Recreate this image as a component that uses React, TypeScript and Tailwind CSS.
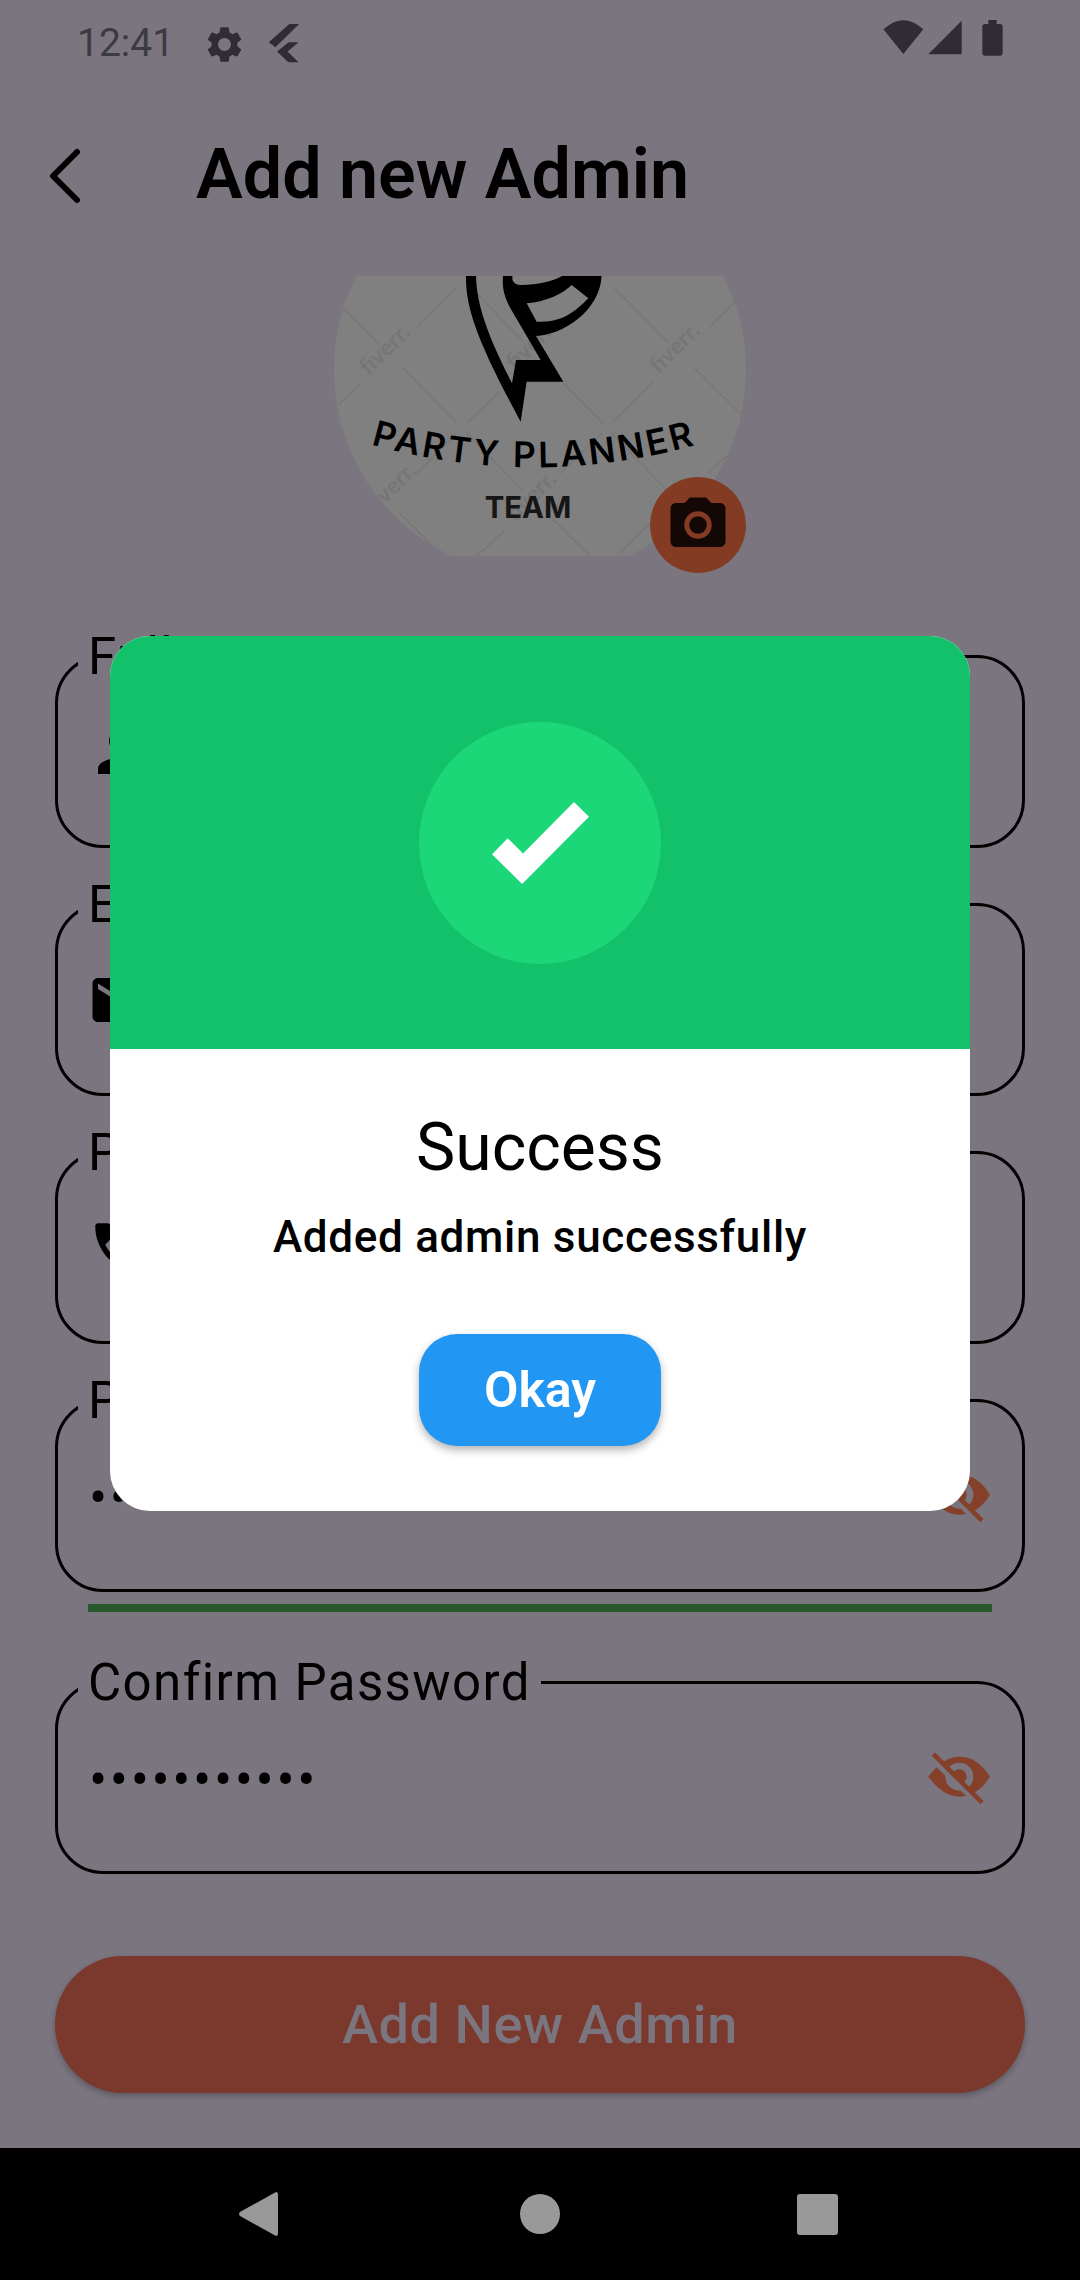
import React from 'react';
import { MdCameraAlt, MdEmail, MdPerson, MdPhone, MdSettings } from 'react-icons/md';

const fiverrMarks = [
  [270, 285],
  [710, 270],
  [1140, 280],
  [290, 700],
  [710, 725],
];

const bgLines = [
  [130, 145, 235, 250],
  [470, 80, 352, 200],
  [305, 320, 470, 490],
  [180, 370, 115, 435],
  [500, 490, 600, 395],
  [940, 80, 1105, 248],
  [1305, 125, 1228, 200],
  [1180, 320, 1320, 460],
  [1058, 365, 938, 488],
  [530, 100, 670, 245],
  [790, 370, 910, 490],
  [350, 640, 470, 520],
  [500, 520, 668, 690],
  [935, 520, 1100, 690],
  [1300, 570, 1225, 640],
  [300, 760, 420, 880],
  [615, 810, 530, 888],
  [755, 775, 870, 888],
  [1050, 790, 960, 880],
  [905, 520, 780, 640],
];

// logo picture of the avatar, coordinates follow the reference crop
const AvatarLogo = () => (
  <svg viewBox="102 48 1236 840" className="block w-[412px] h-[280px] mt-[112px]">
    {bgLines.map((l, i) => (
      <line key={i} x1={l[0]} y1={l[1]} x2={l[2]} y2={l[3]} stroke="#767676" strokeWidth="4" />
    ))}
    {fiverrMarks.map((m, i) => (
      <text
        key={i}
        x={m[0]}
        y={m[1]}
        textAnchor="middle"
        transform={`rotate(-45 ${m[0]} ${m[1]})`}
        fontFamily="Lato, sans-serif"
        fontWeight="700"
        fontSize="70"
        fill="#767676"
      >
        fiverr.
      </text>
    ))}
    <path
      fillRule="evenodd"
      d="M498 40 C495 140 530 240 662 485 L680 365 L790 365 L708 228 C790 225 905 150 905 40 Z
         M528 40 C528 130 560 220 636 370 L648 300 L722 300 L640 160 C610 110 605 80 610 40 Z
         M640 40 C632 60 640 75 665 75 C720 75 770 60 800 40 Z
         M680 130 C740 125 790 100 815 75 L865 115 C830 150 790 190 710 185 Z"
      fill="#000"
    />
    <path id="partyArc" d="M212 553 Q 700 690 1188 555" fill="none" />
    <text fontFamily="Inter, sans-serif" fontWeight="600" fontSize="106" fill="#000">
      <textPath href="#partyArc" textLength="985" lengthAdjust="spacing">
        PARTY PLANNER
      </textPath>
    </text>
    <text
      x="684"
      y="775"
      textAnchor="middle"
      fontFamily="Inter, sans-serif"
      fontWeight="700"
      fontSize="88"
      fill="#161616"
    >
      TEAM
    </text>
  </svg>
);

const StatusBar = () => (
  <div className="h-[88px] flex items-center shrink-0 text-[#3c3a42]">
    <span className="ml-[77px] text-[39px] leading-none w-[130px] mt-[-1px]">12:41</span>
    <MdSettings className="w-[43px] h-[43px] ml-[-4px] text-[#2f2d33]" />
    <svg viewBox="230 36 105 130" className="w-[35px] h-[43px] ml-[20px] mt-[-1px]" fill="#2f2d33">
      <polygon points="300,42 330,42 258,112 238,97" />
      <polygon points="298,97 328,97 295,125 328,158 297,158 263,125" />
    </svg>
    <svg viewBox="0 0 450 210" className="w-[150px] h-[70px] ml-auto mr-[60px] mt-[-8px]" fill="#2f2d33">
      <path d="M40 73 Q100 18 160 73 L100 147 Z" />
      <polygon points="175,148 275,47 275,148" />
      <rect x="337" y="57" width="61" height="95" rx="8" />
      <rect x="355" y="45" width="25" height="14" />
    </svg>
  </div>
);

const EyeOff = () => (
  <svg viewBox="0 0 300 255" className="w-[100px] h-[85px] ml-auto mr-[12px] shrink-0">
    <path
      d="M55 125 C85 85 115 65 148 65 C185 65 215 85 240 125 C215 165 185 185 148 185 C115 185 85 165 55 125 Z"
      fill="#85402a"
    />
    <circle cx="148" cy="125" r="42" fill="#7b7580" />
    <circle cx="148" cy="125" r="22" fill="#85402a" />
    <line x1="62" y1="63" x2="212" y2="208" stroke="#7b7580" strokeWidth="24" />
    <line x1="70" y1="57" x2="216" y2="203" stroke="#85402a" strokeWidth="14" />
  </svg>
);

type FieldProps = {
  label: string;
  icon?: React.ReactNode;
  dots?: boolean;
};

const Field = ({ label, icon, dots }: FieldProps) => (
  <div className="relative h-[193px] mx-[55px] border-[3px] border-black rounded-[48px] flex items-center shrink-0">
    <span className="absolute left-[20px] top-[-31px] px-[10px] bg-[#7b7580] text-[51px] leading-[60px] tracking-[1.4px] text-black">
      {label}
    </span>
    {icon}
    {dots && (
      <span className="ml-[31px] mt-[4px] text-[54px] leading-none tracking-[2.6px] text-black">•••••••••••</span>
    )}
    {dots && <EyeOff />}
  </div>
);

const SuccessDialog = () => (
  <div className="absolute left-[110px] top-[636px] w-[860px] h-[875px] rounded-[40px] bg-white overflow-hidden flex flex-col items-center">
    <div className="w-full h-[413px] bg-[#13c16b] flex items-center justify-center shrink-0">
      <div className="w-[242px] h-[242px] rounded-full bg-[#1cd778] flex items-center justify-center">
        <svg viewBox="335 306 290 245" className="w-[97px] h-[82px]" fill="#fff">
          <polygon points="335,462 382,414 428,460 580,306 625,350 425,551" />
        </svg>
      </div>
    </div>
    <p className="mt-[59px] text-[66px] leading-[80px] text-black">Success</p>
    <p className="mt-[22px] text-[44px] leading-[54px] font-medium tracking-[0.7px] text-black">
      Added admin successfully
    </p>
    <div className="mt-[70px] w-[242px] h-[112px] rounded-[38px] bg-[#2196f3] shadow-[0_4px_8px_rgba(0,0,0,0.3)] flex items-center justify-center">
      <span className="text-[50px] font-semibold text-white">Okay</span>
    </div>
  </div>
);

const App = () => {
  return (
    <div
      className="relative w-[1080px] h-[2280px] overflow-hidden bg-[#7b7580] flex flex-col"
      style={{ fontFamily: 'Roboto, sans-serif' }}
    >
      <StatusBar />

      {/* header */}
      <div className="h-[188px] flex items-start shrink-0">
        <svg viewBox="0 0 36 60" className="w-[36px] h-[60px] ml-[47px] mt-[58px]" fill="none">
          <path d="M30 6 L6 30 L30 54" stroke="#000" strokeWidth="6" strokeLinecap="round" strokeLinejoin="round" />
        </svg>
        <h1 className="ml-[113px] mt-[44px] text-[70px] leading-[84px] font-semibold text-black">Add new Admin</h1>
      </div>

      {/* avatar */}
      <div className="relative h-[280px] shrink-0">
        <div className="h-[280px] overflow-hidden flex justify-center">
          <div className="w-[412px] h-[412px] mt-[-112px] rounded-full bg-[#808080] overflow-hidden shrink-0">
            <AvatarLogo />
          </div>
        </div>
        <div className="absolute left-[650px] top-[201px] w-[96px] h-[96px] rounded-full bg-[#833b24] flex items-center justify-center">
          <MdCameraAlt className="w-[66px] h-[66px] text-[#140806]" />
        </div>
      </div>

      <div className="mt-[99px] flex flex-col gap-[55px]">
        <Field label="Full Name" icon={<MdPerson className="w-[66px] h-[66px] ml-[29px]" />} />
        <Field label="Email" icon={<MdEmail className="w-[66px] h-[66px] ml-[29px]" />} />
        <Field label="Phone Number" icon={<MdPhone className="w-[66px] h-[66px] ml-[29px]" />} />
        <Field label="Password" dots />
      </div>

      <div className="h-[8px] mt-[12px] mx-[88px] bg-[#28582c] shrink-0" />

      <div className="mt-[69px]">
        <Field label="Confirm Password" dots />
      </div>

      <div className="mt-[82px] mx-[55px] h-[137px] rounded-[68px] bg-[#7a392c] shadow-[0_3px_6px_rgba(0,0,0,0.25)] flex items-center justify-center shrink-0">
        <span className="text-[54px] font-medium tracking-[0.6px] text-[#7b7580]">Add New Admin</span>
      </div>

      {/* android nav bar */}
      <div className="mt-auto h-[132px] bg-black flex items-center shrink-0">
        <svg viewBox="0 0 39 44" className="w-[39px] h-[44px] ml-[239px]" fill="#999">
          <path d="M37 0 Q39 0 39 3 L39 41 Q39 44 37 44 L1 24 Q-1 22 1 20 Z" />
        </svg>
        <div className="w-[40px] h-[40px] ml-[242px] rounded-full bg-[#999]" />
        <div className="w-[41px] h-[41px] ml-[237px] rounded-[3px] bg-[#999]" />
      </div>

      <SuccessDialog />
    </div>
  );
};

export default App;
